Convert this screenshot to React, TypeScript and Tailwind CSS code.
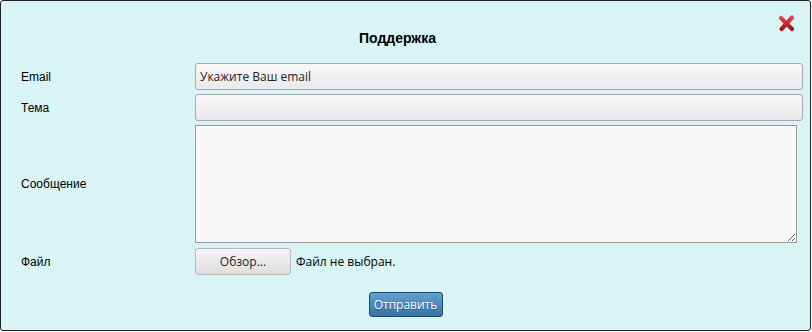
import React from "react";

function CloseIcon() {
  return (
    <svg width="18" height="18" viewBox="0 0 18 18">
      <defs>
        <linearGradient id="xg" x1="0" y1="0" x2="0" y2="1">
          <stop offset="0" stopColor="#e8404a" />
          <stop offset="1" stopColor="#b01018" />
        </linearGradient>
      </defs>
      <path d="M3 4 L14 15 M14 3.5 L3.5 15" stroke="url(#xg)" strokeWidth="4.2" strokeLinecap="round" />
    </svg>
  );
}

export default function App() {
  const label = "w-[194px] shrink-0 pl-5 text-[12px] text-black font-['Liberation_Sans',Arial,sans-serif]";
  const input =
    "flex-1 h-[27px] rounded-[3px] border border-[#a9a9a9] bg-gradient-to-b from-[#f8f8f8] to-[#e9e9e9] px-[4px] text-[12px] text-[#222] font-['Open_Sans',sans-serif] outline-none";

  return (
    <div className="w-[812px] h-[332px] bg-white">
      <div className="w-[811px] h-[331px] border border-[#222] rounded-[3px] bg-[#d9f4f4] flex flex-col">
        <div className="relative h-[62px] flex items-center justify-center pt-[12px] pr-4">
          <h2 className="text-[14px] font-bold text-black font-['Liberation_Sans',Arial,sans-serif]">Поддержка</h2>
          <button className="absolute right-[14px] top-[13px]">
            <CloseIcon />
          </button>
        </div>

        <div className="flex flex-col gap-[4px] pr-[7px]">
          <div className="flex items-center">
            <label className={label}>Email</label>
            <input className={input} defaultValue="Укажите Ваш email" />
          </div>
          <div className="flex items-center">
            <label className={label}>Тема</label>
            <input className={input} defaultValue="" />
          </div>
          <div className="flex items-center">
            <label className={label}>Сообщение</label>
            <div className="flex-1 pr-[6px]">
              <textarea className="block w-full h-[118px] border border-[#999] bg-[#f7f7f7] outline-none" />
            </div>
          </div>
          <div className="flex items-center mt-px">
            <label className={label}>Файл</label>
            <div className="flex items-center gap-[5px]">
              <button className="w-[96px] h-[27px] rounded-[3px] border border-[#b9b9b9] bg-gradient-to-b from-[#f6f6f6] to-[#dedede] text-[12px] text-[#222] font-['Open_Sans',sans-serif]">
                Обзор...
              </button>
              <span className="text-[12px] text-black font-['Open_Sans',sans-serif]">Файл не выбран.</span>
            </div>
          </div>
        </div>

        <div className="flex justify-center mt-[17px]">
          <button className="w-[74px] h-[25px] rounded-[3px] border border-[#1d4a6a] bg-gradient-to-b from-[#5fa2d2] to-[#3674a4] text-[12px] text-white font-['Open_Sans',sans-serif] [text-shadow:0_1px_1px_rgba(0,0,0,0.35)]">
            Отправить
          </button>
        </div>
      </div>
    </div>
  );
}
